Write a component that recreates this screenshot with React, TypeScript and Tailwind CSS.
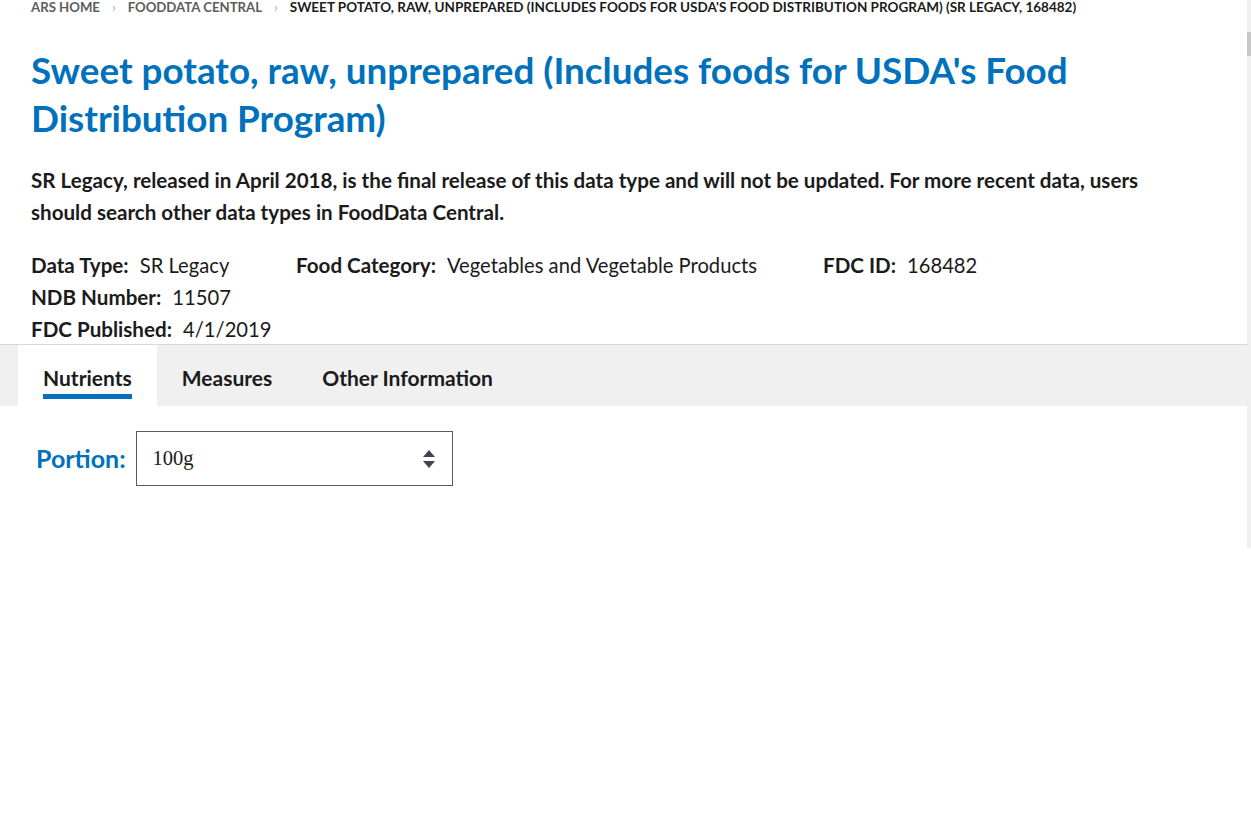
const META = [
  [
    { label: "Data Type:", value: "SR Legacy" },
    { label: "NDB Number:", value: "11507" },
    { label: "FDC Published:", value: "4/1/2019" },
  ],
  [{ label: "Food Category:", value: "Vegetables and Vegetable Products" }],
  [{ label: "FDC ID:", value: "168482" }],
];

const TABS = ["Nutrients", "Measures", "Other Information"];

export default function App() {
  return (
    <div className="w-[1251px] h-[820px] bg-white font-['Lato',sans-serif] text-[#1b1b1b]">
      <div className="flex h-[548px]">
        <main className="flex-1 overflow-hidden">
          {/* breadcrumb */}
          <nav className="flex items-center gap-3 px-[31px] -mt-[1px] h-[17px] text-[13.2px] font-bold uppercase">
            <span className="text-[#5c5c5c]">ARS Home</span>
            <span className="text-[#a9aeb1] font-normal">›</span>
            <span className="text-[#5c5c5c]">FoodData Central</span>
            <span className="text-[#a9aeb1] font-normal">›</span>
            <span className="text-[13.5px]">Sweet Potato, raw, unprepared (Includes foods for USDA's Food Distribution Program) (SR Legacy, 168482)</span>
          </nav>

          <div className="px-[31px]">
            <h1 className="mt-[30px] text-[36.8px] leading-[48px] font-bold text-[#0071bc] max-w-[1100px]">
              Sweet potato, raw, unprepared (Includes foods for USDA's Food Distribution Program)
            </h1>
            <p className="mt-[22px] text-[20.6px] leading-[32px] font-bold max-w-[1150px]">
              SR Legacy, released in April 2018, is the final release of this data type and will not be updated. For more recent data, users should search other data types in FoodData Central.
            </p>
            <div className="mt-[21px] flex">
              {META.map((col, i) => (
                <div key={i} className={i === 0 ? "w-[265px]" : i === 1 ? "w-[527px]" : ""}>
                  {col.map((m) => (
                    <div key={m.label} className="h-[32px] flex items-center">
                      <span className="font-bold text-[20.6px]">{m.label}</span>
                      <span className="ml-[11px] text-[20.2px]">{m.value}</span>
                    </div>
                  ))}
                </div>
              ))}
            </div>
          </div>

          {/* tabs */}
          <div className="-mt-[1px] border-t border-[#d6d7d9] bg-[#f0f0f0] h-[62px] flex pl-[18px]">
            {TABS.map((t, i) => (
              <div
                key={t}
                className={
                  "h-full flex items-center pt-[4px] px-[25px] text-[21px] font-bold " +
                  (i === 0 ? "bg-white" : "")
                }
              >
                <span className="relative">
                  {t}
                  {i === 0 && <span className="absolute left-0 right-0 top-[32px] h-[5px] bg-[#0071bc]" />}
                </span>
              </div>
            ))}
          </div>

          {/* portion */}
          <div className="flex items-center pl-[36px] mt-[25px]">
            <label className="text-[25px] font-bold text-[#0071bc] mr-[10px]">Portion:</label>
            <div className="w-[317px] h-[55px] border border-[#565c65] flex items-center justify-between pl-[16px] pr-[16px]">
              <span className="font-['Liberation_Serif',serif] text-[20.5px]">100g</span>
              <svg width="14" height="20" viewBox="0 0 14 20" fill="#3d4551">
                <path d="M7 1 L13 8 H1 Z" />
                <path d="M7 19 L13 12 H1 Z" />
              </svg>
            </div>
          </div>
        </main>
        {/* scrollbar */}
        <div className="w-[4px] bg-[#efefef] flex flex-col">
          <div className="mt-[32px] h-[24px] bg-[#c8c8c8]" />
        </div>
      </div>
    </div>
  );
}
